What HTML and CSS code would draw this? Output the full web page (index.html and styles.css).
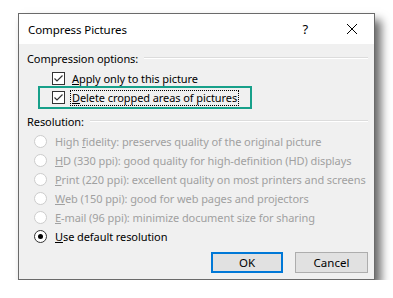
FILE: index.html
```html
<!DOCTYPE html>
<html lang="en">
<head>
  <meta charset="UTF-8">
  <meta name="viewport" content="width=device-width, initial-scale=1.0">
  <title>Compress Pictures</title>
  <link rel="stylesheet" href="styles.css">
</head>
<body>
  <div class="dialog">
    <div class="titlebar">
      <span class="title">Compress Pictures</span>
      <span class="help">?</span>
      <svg class="close" width="12" height="12" viewBox="0 0 12 12">
        <path d="M1 1 L11 11 M11 1 L1 11" stroke="#000" stroke-width="1" fill="none"/>
      </svg>
    </div>

    <div class="content">
      <div class="group-head">
        <span>Compression options:</span>
        <span class="rule"></span>
      </div>
      <label class="check-row">
        <svg class="checkbox" width="13" height="13" viewBox="0 0 13 13">
          <rect x="0.5" y="0.5" width="12" height="12" fill="#fff" stroke="#333"/>
          <path d="M2.5 6.5 L5 9 L10.5 3.5" stroke="#333" stroke-width="1.2" fill="none"/>
        </svg>
        <span><u>A</u>pply only to this picture</span>
      </label>
      <label class="check-row highlighted">
        <svg class="checkbox" width="13" height="13" viewBox="0 0 13 13">
          <rect x="0.5" y="0.5" width="12" height="12" fill="#fff" stroke="#333"/>
          <path d="M2.5 6.5 L5 9 L10.5 3.5" stroke="#333" stroke-width="1.2" fill="none"/>
        </svg>
        <span class="focus"><u>D</u>elete cropped areas of pictures</span>
      </label>

      <div class="group-head second">
        <span>Resolution:</span>
        <span class="rule"></span>
      </div>
      <div class="radio-row disabled"><span class="radio"></span><span>High <u>f</u>idelity: preserves quality of the original picture</span></div>
      <div class="radio-row disabled"><span class="radio"></span><span><u>H</u>D (330 ppi): good quality for high-definition (HD) displays</span></div>
      <div class="radio-row disabled"><span class="radio"></span><span><u>P</u>rint (220 ppi): excellent quality on most printers and screens</span></div>
      <div class="radio-row disabled"><span class="radio"></span><span><u>W</u>eb (150 ppi): good for web pages and projectors</span></div>
      <div class="radio-row disabled"><span class="radio"></span><span><u>E</u>-mail (96 ppi): minimize document size for sharing</span></div>
      <div class="radio-row"><span class="radio checked"></span><span><u>U</u>se default resolution</span></div>

      <div class="buttons">
        <button class="btn default">OK</button>
        <button class="btn">Cancel</button>
      </div>
    </div>
  </div>
</body>
</html>
```

FILE: styles.css
```css
body {
  margin: 0;
  background: #fff;
  font-family: 'Noto Sans', 'Open Sans', sans-serif;
  font-size: 11px;
  letter-spacing: -0.08px;
  color: #000;
  white-space: nowrap;
}
.dialog {
  width: 355px;
  margin: 13px 0 0 18px;
  border: 1px solid #6a6a6a;
  background: #f0f0f0;
  box-shadow: 6px 7px 9px rgba(0, 0, 0, 0.6);
}
.titlebar {
  height: 30px;
  background: #fff;
  display: flex;
  align-items: center;
  padding: 0 16px 0 9px;
  font-size: 11.5px;
}
.title {
  flex: 1;
}
.help {
  margin-right: 38px;
  font-size: 13px;
}
.content {
  padding: 5px 6px 6px 8px;
}
.group-head {
  height: 18px;
  display: flex;
  align-items: center;
  gap: 6px;
}
.group-head.second {
  margin-top: 5px;
}
.rule {
  flex: 1;
  height: 1px;
  background: #dcdcdc;
  border-bottom: 1px solid #fff;
}
.check-row {
  height: 19px;
  display: flex;
  align-items: center;
  gap: 7px;
  padding-left: 25px;
  position: relative;
}
.check-row:first-of-type {
  margin-top: 2px;
}
.highlighted::before {
  content: '';
  position: absolute;
  left: 11px;
  top: -2px;
  width: 210px;
  height: 19px;
  border: 2px solid #17a08a;
}
.focus {
  border: 1px dotted #000;
  padding: 0 1px;
  margin-left: -2px;
  line-height: 14px;
}
.radio-row {
  height: 19px;
  display: flex;
  align-items: center;
  gap: 8px;
  padding-left: 7px;
}
.group-head.second + .radio-row {
  margin-top: 2px;
}
.radio {
  width: 11px;
  height: 11px;
  border: 1px solid #333;
  border-radius: 50%;
  background: #fff;
  position: relative;
  flex: none;
}
.disabled {
  color: #a0a0a0;
}
.disabled .radio {
  border-color: #cccccc;
}
.radio.checked::after {
  content: '';
  position: absolute;
  left: 3px;
  top: 3px;
  width: 5px;
  height: 5px;
  border-radius: 50%;
  background: #000;
}
.buttons {
  display: flex;
  justify-content: flex-end;
  gap: 12px;
  margin-top: 6px;
}
.btn {
  font-family: inherit;
  font-size: 11.5px;
  width: 73px;
  height: 21px;
  padding: 0;
  background: #e1e1e1;
  border: 1px solid #adadad;
  color: #000;
}
.btn.default {
  border: 2px solid #0078d7;
  width: 72px;
}
```
